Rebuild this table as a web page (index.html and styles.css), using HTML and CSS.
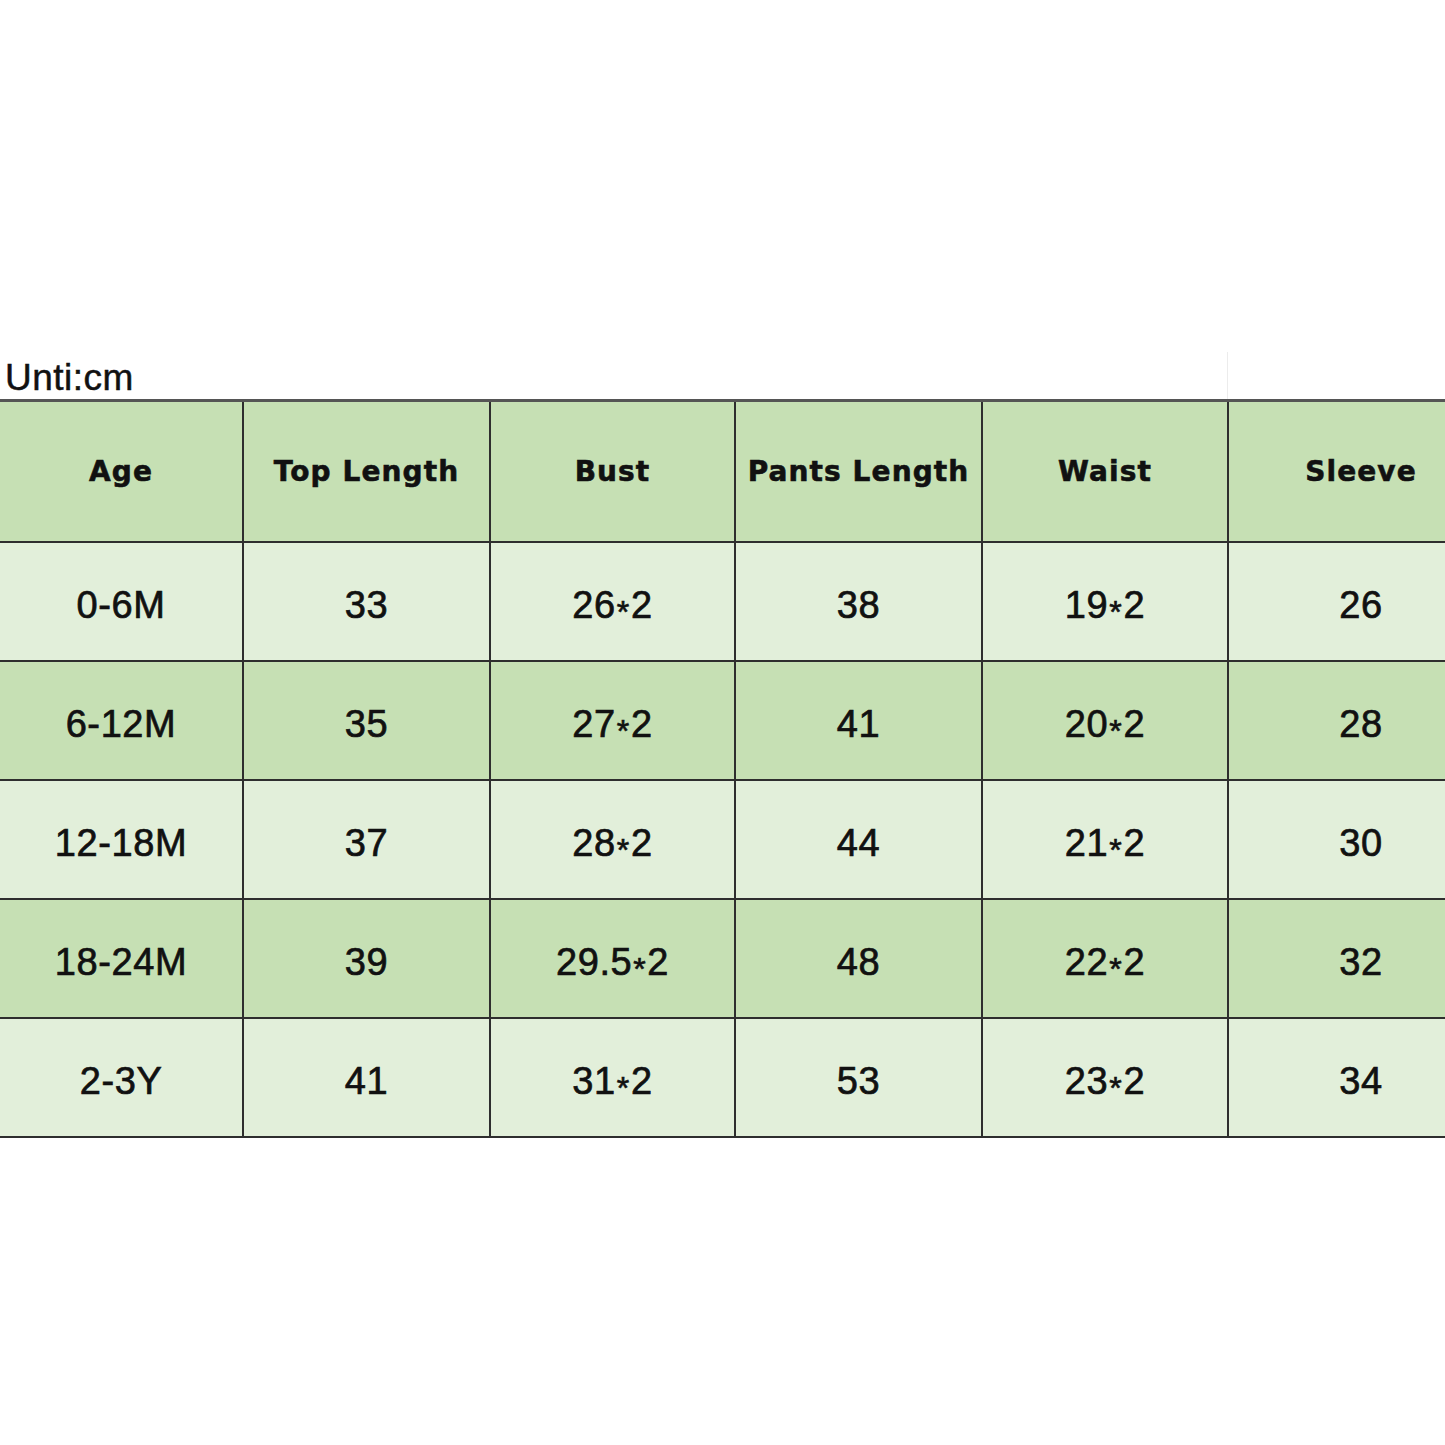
FILE: index.html
```html
<!DOCTYPE html>
<html>
<head>
<meta charset="utf-8">
<link rel="stylesheet" href="styles.css">
</head>
<body>
<div class="page">
  <div class="caption-row">
    <div class="caption">Unti:cm</div>
    <div class="caption-rest"></div>
  </div>
  <table class="size-table">
    <colgroup>
      <col class="c1"><col class="c2"><col class="c3"><col class="c4"><col class="c5"><col class="c6">
    </colgroup>
    <thead>
      <tr class="head">
        <th>Age</th><th>Top Length</th><th>Bust</th><th>Pants Length</th><th>Waist</th><th>Sleeve</th>
      </tr>
    </thead>
    <tbody>
      <tr class="light"><td>0-6M</td><td>33</td><td>26<span class="x">*</span>2</td><td>38</td><td>19<span class="x">*</span>2</td><td>26</td></tr>
      <tr class="dark"><td>6-12M</td><td>35</td><td>27<span class="x">*</span>2</td><td>41</td><td>20<span class="x">*</span>2</td><td>28</td></tr>
      <tr class="light"><td>12-18M</td><td>37</td><td>28<span class="x">*</span>2</td><td>44</td><td>21<span class="x">*</span>2</td><td>30</td></tr>
      <tr class="dark"><td>18-24M</td><td>39</td><td>29.5<span class="x">*</span>2</td><td>48</td><td>22<span class="x">*</span>2</td><td>32</td></tr>
      <tr class="light"><td>2-3Y</td><td>41</td><td>31<span class="x">*</span>2</td><td>53</td><td>23<span class="x">*</span>2</td><td>34</td></tr>
    </tbody>
  </table>
</div>
</body>
</html>
```
FILE: styles.css
```css
html, body {
  margin: 0;
  padding: 0;
  background: #ffffff;
  overflow: hidden;
}
.page {
  width: 1445px;
  height: 1445px;
  overflow: hidden;
  padding-top: 352px;
  box-sizing: border-box;
}
.caption-row {
  display: flex;
  height: 47px;
  width: 1493px;
}
.caption {
  width: 1228px;
  font-family: "Liberation Sans", Arial, sans-serif;
  font-size: 37px;
  letter-spacing: 0.5px;
  color: #111;
  -webkit-text-stroke: 0.5px #111;
  padding-left: 5px;
  line-height: 52px;
  border-right: 1px solid #ececec;
  box-sizing: border-box;
}
.caption-rest {
  flex: 1;
}
.size-table {
  border-collapse: collapse;
  table-layout: fixed;
  width: 1493px;
}
.c1 { width: 243px; }
.c2 { width: 247px; }
.c3 { width: 245px; }
.c4 { width: 247px; }
.c5 { width: 246px; }
.c6 { width: 265px; }
.size-table th,
.size-table td {
  border: 2px solid #2e2e2e;
  text-align: center;
  vertical-align: middle;
  padding: 0;
  color: #111;
}
.size-table tr > :first-child { border-left: none; }
.size-table tr > :last-child { border-right: none; }
.size-table thead th {
  border-top: 3px solid #555;
}
.head {
  height: 141px;
  background: #c6e0b4;
}
.head th {
  font-family: "DejaVu Sans", Verdana, sans-serif;
  font-weight: bold;
  font-size: 28px;
  letter-spacing: 1.1px;
  -webkit-text-stroke: 0.6px #111;
}
.size-table tbody tr {
  height: 119px;
}
.size-table td {
  font-family: "Liberation Sans", Arial, sans-serif;
  font-size: 38px;
  line-height: 44px;
  letter-spacing: 0.6px;
  -webkit-text-stroke: 0.7px #111;
  padding-top: 8px;
}
.size-table td .x {
  font-size: 32px;
  line-height: 0;
  vertical-align: -0.16em;
  padding: 0 1px;
}
.light { background: #e2efda; }
.dark { background: #c6e0b4; }
```
